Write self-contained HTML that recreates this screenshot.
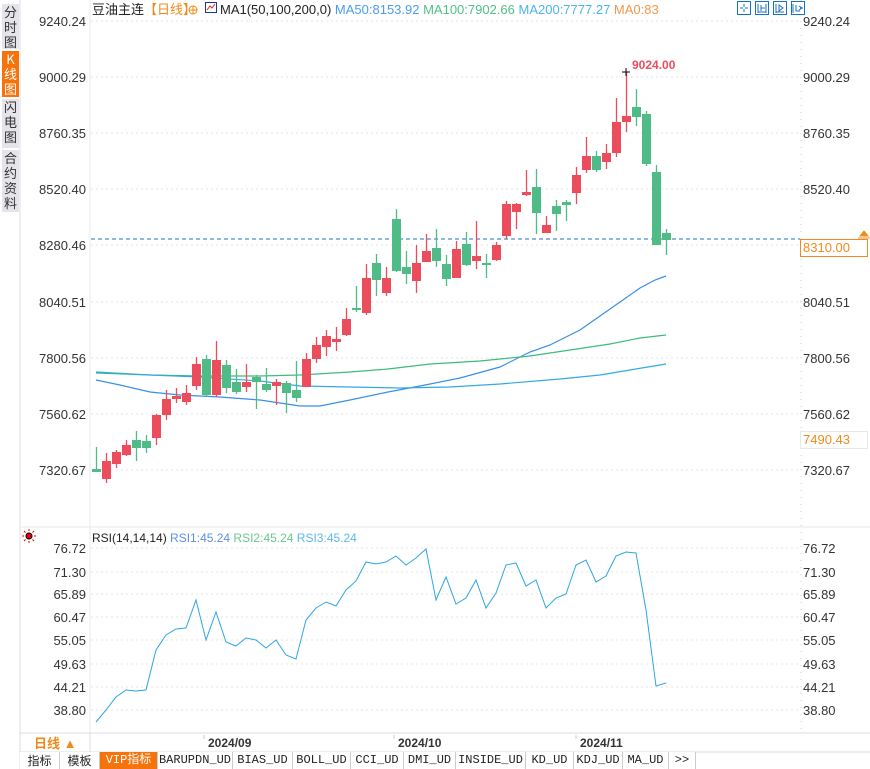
<!DOCTYPE html>
<html><head><meta charset="utf-8"><style>
*{margin:0;padding:0}
body{width:870px;height:769px;background:#fff;overflow:hidden;position:relative;font-family:"Liberation Sans","Noto Sans CJK SC",sans-serif}
svg{position:absolute;left:0;top:0}
.tab{position:absolute;top:752px;height:17px;font:12px "Liberation Mono","Noto Sans CJK SC",monospace;line-height:17px;text-align:center;border-right:1px solid #ccc;color:#222;background:#fff}
.side{position:absolute;left:2px;width:17px;background:#e4e4ea;font-size:13px;line-height:15px;text-align:center;color:#333;font-family:"Noto Sans CJK SC",sans-serif}
</style></head><body>
<svg width="870" height="769" xmlns="http://www.w3.org/2000/svg" font-family="Liberation Sans, Noto Sans CJK SC, sans-serif">
<line x1="20" y1="0" x2="20" y2="769" stroke="#d8dce4"/>
<line x1="90" y1="0" x2="90" y2="733" stroke="#e4e8ee"/>
<line x1="801" y1="0" x2="801" y2="733" stroke="#ccc" stroke-dasharray="1,6"/>
<line x1="20" y1="527" x2="870" y2="527" stroke="#e4e8ee"/>
<line x1="20" y1="733" x2="870" y2="733" stroke="#d8dce4"/>
<line x1="20" y1="752" x2="870" y2="752" stroke="#d8dce4"/>
<line x1="90" y1="733" x2="90" y2="752" stroke="#d8dce4"/>
<g stroke="#e6e6e6" stroke-dasharray="2,3">
<line x1="91" y1="21" x2="800" y2="21"/><line x1="91" y1="77" x2="800" y2="77"/><line x1="91" y1="133" x2="800" y2="133"/><line x1="91" y1="189" x2="800" y2="189"/><line x1="91" y1="245" x2="800" y2="245"/><line x1="91" y1="302" x2="800" y2="302"/><line x1="91" y1="358" x2="800" y2="358"/><line x1="91" y1="414" x2="800" y2="414"/><line x1="91" y1="470" x2="800" y2="470"/>
<line x1="91" y1="548" x2="800" y2="548"/><line x1="91" y1="572" x2="800" y2="572"/><line x1="91" y1="594" x2="800" y2="594"/><line x1="91" y1="617" x2="800" y2="617"/><line x1="91" y1="640" x2="800" y2="640"/><line x1="91" y1="664" x2="800" y2="664"/><line x1="91" y1="687" x2="800" y2="687"/><line x1="91" y1="710" x2="800" y2="710"/>
</g>
<g font-size="13" fill="#333" text-anchor="end">
<text x="86" y="26">9240.24</text><text x="86" y="82">9000.29</text><text x="86" y="138">8760.35</text><text x="86" y="194">8520.40</text><text x="86" y="250">8280.46</text><text x="86" y="307">8040.51</text><text x="86" y="363">7800.56</text><text x="86" y="419">7560.62</text><text x="86" y="475">7320.67</text>
<text x="86" y="553">76.72</text><text x="86" y="577">71.30</text><text x="86" y="599">65.89</text><text x="86" y="622">60.47</text><text x="86" y="645">55.05</text><text x="86" y="669">49.63</text><text x="86" y="692">44.21</text><text x="86" y="715">38.80</text>
</g>
<g font-size="13" fill="#333">
<text x="803" y="26">9240.24</text><text x="803" y="82">9000.29</text><text x="803" y="138">8760.35</text><text x="803" y="194">8520.40</text><text x="803" y="307">8040.51</text><text x="803" y="363">7800.56</text><text x="803" y="419">7560.62</text><text x="803" y="475">7320.67</text>
<text x="803" y="553">76.72</text><text x="803" y="577">71.30</text><text x="803" y="599">65.89</text><text x="803" y="622">60.47</text><text x="803" y="645">55.05</text><text x="803" y="669">49.63</text><text x="803" y="692">44.21</text><text x="803" y="715">38.80</text>
</g>
<rect x="800.5" y="239.5" width="67" height="17" fill="#fff" stroke="#f08a1c"/>
<text x="803" y="252" font-size="13" fill="#f08a1c">8310.00</text>
<path d="M860 236l4-5 4 5zM858 238h12" stroke="#f08a1c" fill="#f08a1c"/>
<rect x="800.5" y="431.5" width="67" height="17" fill="#fff" stroke="#e8e8e8"/>
<text x="803" y="444" font-size="13" fill="#f08a1c">7490.43</text>
<line x1="91" y1="239" x2="800" y2="239" stroke="#1a6fd6" stroke-dasharray="4,3"/>
<!-- MA lines -->
<polyline fill="none" stroke="#3a8ee8" stroke-width="1.2" points="96,380 120,385 150,392 180,395 220,397 260,400 300,406 320,406 350,400 388,392 420,386 460,378 500,367 530,352 550,345 580,330 600,316 620,302 640,288 655,280 666,276"/>
<polyline fill="none" stroke="#3cbc7c" stroke-width="1.2" points="96,372 150,375 200,376 260,376 300,375 350,372 388,369 430,364 480,361 530,356 570,350 610,344 640,338 666,335"/>
<polyline fill="none" stroke="#34a8e4" stroke-width="1.2" points="96,373 150,375 200,377 260,381 300,386 350,387 400,388 450,387 500,384 560,379 600,375 630,370 666,364"/>
<!-- candles -->
<g id="c"></g>
<g fill="#ec4d5d" stroke="#ec4d5d">
<path stroke-width="1.3" fill="none" d="M106.5 453V483M116.5 450V468M126.5 440V456M156.5 414V445M166.5 390V420M176.5 388V403M186.5 385V405M196.5 357V390M216.5 341V397M246.5 364V392M276.5 379V405M306.5 353V387M316.5 337V363M326.5 330V356M336.5 327V351M346.5 308V336M366.5 264V315M386.5 267V296M416.5 245V293M426.5 234V262M456.5 241V278M476.5 221V269M496.5 242V261M506.5 201V239M516.5 203V229M526.5 170V196M546.5 216V233M576.5 167V204M586.5 137V173M606.5 144V169M616.5 98V157M626.5 72V132"/>
<g stroke="none">
<rect x="102" y="461" width="9" height="18"/><rect x="112" y="452" width="9" height="12"/><rect x="122" y="445" width="9" height="10"/><rect x="152" y="415" width="9" height="23"/><rect x="162" y="399" width="9" height="16"/><rect x="172" y="396" width="9" height="3"/><rect x="182" y="393" width="9" height="9"/><rect x="192" y="364" width="9" height="22"/><rect x="212" y="360" width="9" height="35"/><rect x="242" y="382" width="9" height="5"/><rect x="272" y="382" width="9" height="4"/><rect x="302" y="359" width="9" height="28"/><rect x="312" y="345" width="9" height="14"/><rect x="322" y="336" width="9" height="11"/><rect x="332" y="339" width="9" height="3"/><rect x="342" y="319" width="9" height="16"/><rect x="362" y="278" width="9" height="35"/><rect x="382" y="278" width="9" height="15"/><rect x="412" y="263" width="9" height="18"/><rect x="422" y="251" width="9" height="11"/><rect x="452" y="249" width="9" height="29"/><rect x="472" y="256" width="9" height="5"/><rect x="492" y="245" width="9" height="15"/><rect x="502" y="204" width="9" height="32"/><rect x="512" y="204" width="9" height="8"/><rect x="522" y="192" width="9" height="3"/><rect x="542" y="225" width="9" height="8"/><rect x="572" y="175" width="9" height="18"/><rect x="582" y="156" width="9" height="14"/><rect x="602" y="153" width="9" height="9"/><rect x="612" y="122" width="9" height="31"/><rect x="622" y="116" width="9" height="6"/>
</g></g>
<g fill="#4fbb86" stroke="#4fbb86">
<path stroke-width="1.3" fill="none" d="M96.5 447V471M136.5 431V461M146.5 435V453M206.5 355V397M226.5 360V393M236.5 369V394M256.5 375V409M266.5 368V392M286.5 381V413M296.5 361V402M356.5 286V312M376.5 254V296M396.5 209V272M406.5 251V284M436.5 229V267M446.5 255V286M466.5 232V266M486.5 254V278M536.5 169V234M556.5 200V231M566.5 200V221M596.5 151V172M636.5 89V126M646.5 111V166M656.5 165V245M666.5 229V255"/>
<g stroke="none">
<rect x="92" y="469" width="9" height="3"/><rect x="132" y="440" width="9" height="8"/><rect x="142" y="441" width="9" height="7"/><rect x="202" y="359" width="9" height="36"/><rect x="222" y="365" width="9" height="23"/><rect x="232" y="382" width="9" height="10"/><rect x="252" y="377" width="9" height="5"/><rect x="262" y="384" width="9" height="6"/><rect x="282" y="383" width="9" height="10"/><rect x="292" y="390" width="9" height="8"/><rect x="352" y="308" width="9" height="2"/><rect x="372" y="263" width="9" height="17"/><rect x="392" y="219" width="9" height="52"/><rect x="402" y="267" width="9" height="7"/><rect x="432" y="248" width="9" height="13"/><rect x="442" y="264" width="9" height="15"/><rect x="462" y="244" width="9" height="21"/><rect x="482" y="263" width="9" height="2"/><rect x="532" y="187" width="9" height="26"/><rect x="552" y="206" width="9" height="8"/><rect x="562" y="202" width="9" height="3"/><rect x="592" y="156" width="9" height="14"/><rect x="632" y="107" width="9" height="10"/><rect x="642" y="114" width="9" height="50"/><rect x="652" y="172" width="9" height="73"/><rect x="662" y="233" width="9" height="7"/>
</g></g>
<path d="M622 72h8M626 68v8" stroke="#000"/>
<text x="632" y="69" font-size="12" font-weight="bold" fill="#ec4d5d">9024.00</text>
<!-- RSI -->
<polyline fill="none" stroke="#2ea6e0" stroke-width="1" points="96,722 106,710 116,697 126,690 136,691 146,690 156,650 166,635 176,629 186,628 196,600 206,640 216,612 226,642 236,646 246,638 256,640 266,648 276,640 286,655 296,659 306,620 316,608 326,602 336,606 346,590 356,581 366,562 376,564 386,562 396,556 406,565 416,558 426,549 436,600 446,577 456,604 466,598 476,580 486,608 496,593 506,565 516,563 526,586 536,580 546,608 556,598 566,594 576,565 586,560 596,582 606,576 616,556 626,552 636,553 646,610 656,686 666,683"/>
<circle cx="29" cy="536" r="3" fill="#e00" stroke="#000" stroke-width="1"/>
<path d="M29 529v2M29 541v2M22 536h2M34 536h2M24 531l1.5 1.5M34 531l-1.5 1.5M24 541l1.5-1.5M34 541l-1.5-1.5" stroke="#e00"/>
<text x="92" y="542" font-size="12"><tspan fill="#222">RSI(14,14,14)</tspan><tspan fill="#5b8fe8"> RSI1:45.24</tspan><tspan fill="#6ac88f">  RSI2:45.24</tspan><tspan fill="#5cb8e8">  RSI3:45.24</tspan></text>
<!-- header -->
<text x="92" y="14" font-size="13"><tspan fill="#222">豆油主连</tspan><tspan fill="#f08a1c">【日线】</tspan></text>
<circle cx="193" cy="10" r="4" fill="none" stroke="#f08a1c"/><path d="M189 10h8M193 6v8" stroke="#f08a1c"/>
<rect x="205.5" y="2.5" width="11" height="10" fill="#fff" stroke="#1a3a9a"/><path d="M207 10l3-4 2 2 3-4" stroke="#d22" fill="none"/>
<text x="220" y="14" font-size="13"><tspan fill="#222">MA1(50,100,200,0)</tspan><tspan fill="#4a9cf0"> MA50:8153.92</tspan><tspan fill="#50c08a">  MA100:7902.66</tspan><tspan fill="#4ab4ec">  MA200:7777.27</tspan><tspan fill="#f0984a">  MA0:83</tspan></text>
<g fill="#fff" stroke="#1a72c8">
<rect x="737.5" y="1.5" width="13" height="13"/><rect x="755.5" y="1.5" width="13" height="13"/><rect x="773.5" y="1.5" width="13" height="13"/><rect x="791.5" y="1.5" width="13" height="13"/>
</g>
<path d="M744 4v3M744 9v3M740 8h3M745 8h3M758 4v9M766 4v9M758 12h8M761 5v6M761 8h4M776 4v9M776 12h8M779 5v6l4-3z M793 4v9M796 5v6h4M800 8l3 0M799 6l3 2-3 2" stroke="#1a72c8" fill="none"/>
<!-- date axis -->
<g font-size="12" font-weight="bold" fill="#333"><text x="208" y="747">2024/09</text><text x="398" y="747">2024/10</text><text x="580" y="747">2024/11</text></g>
<path d="M204 735v4M394 735v4M576 735v4" stroke="#ccc"/>
<text x="34" y="748" font-size="13" font-weight="bold" fill="#f08a1c">日线 ▲</text>
</svg>
<div class="side" style="top:4px;height:45px">分<br>时<br>图</div>
<div class="side" style="top:51px;height:46px;background:#f5730a;color:#fff">K<br>线<br>图</div>
<div class="side" style="top:99px;height:49px">闪<br>电<br>图</div>
<div class="side" style="top:150px;height:62px">合<br>约<br>资<br>料</div>
<div class="tab" style="left:20px;width:39px;font-family:'Noto Sans CJK SC',sans-serif">指标</div>
<div class="tab" style="left:60px;width:39px;font-family:'Noto Sans CJK SC',sans-serif">模板</div>
<div class="tab" style="left:100px;width:57px;background:#f5730a;color:#fff">VIP指标</div>
<div class="tab" style="left:158px;width:74px">BARUPDN_UD</div>
<div class="tab" style="left:233px;width:59px">BIAS_UD</div>
<div class="tab" style="left:293px;width:57px">BOLL_UD</div>
<div class="tab" style="left:351px;width:52px">CCI_UD</div>
<div class="tab" style="left:404px;width:51px">DMI_UD</div>
<div class="tab" style="left:456px;width:69px">INSIDE_UD</div>
<div class="tab" style="left:526px;width:47px">KD_UD</div>
<div class="tab" style="left:574px;width:48px">KDJ_UD</div>
<div class="tab" style="left:623px;width:45px">MA_UD</div>
<div class="tab" style="left:669px;width:26px">&gt;&gt;</div>
</body></html>
